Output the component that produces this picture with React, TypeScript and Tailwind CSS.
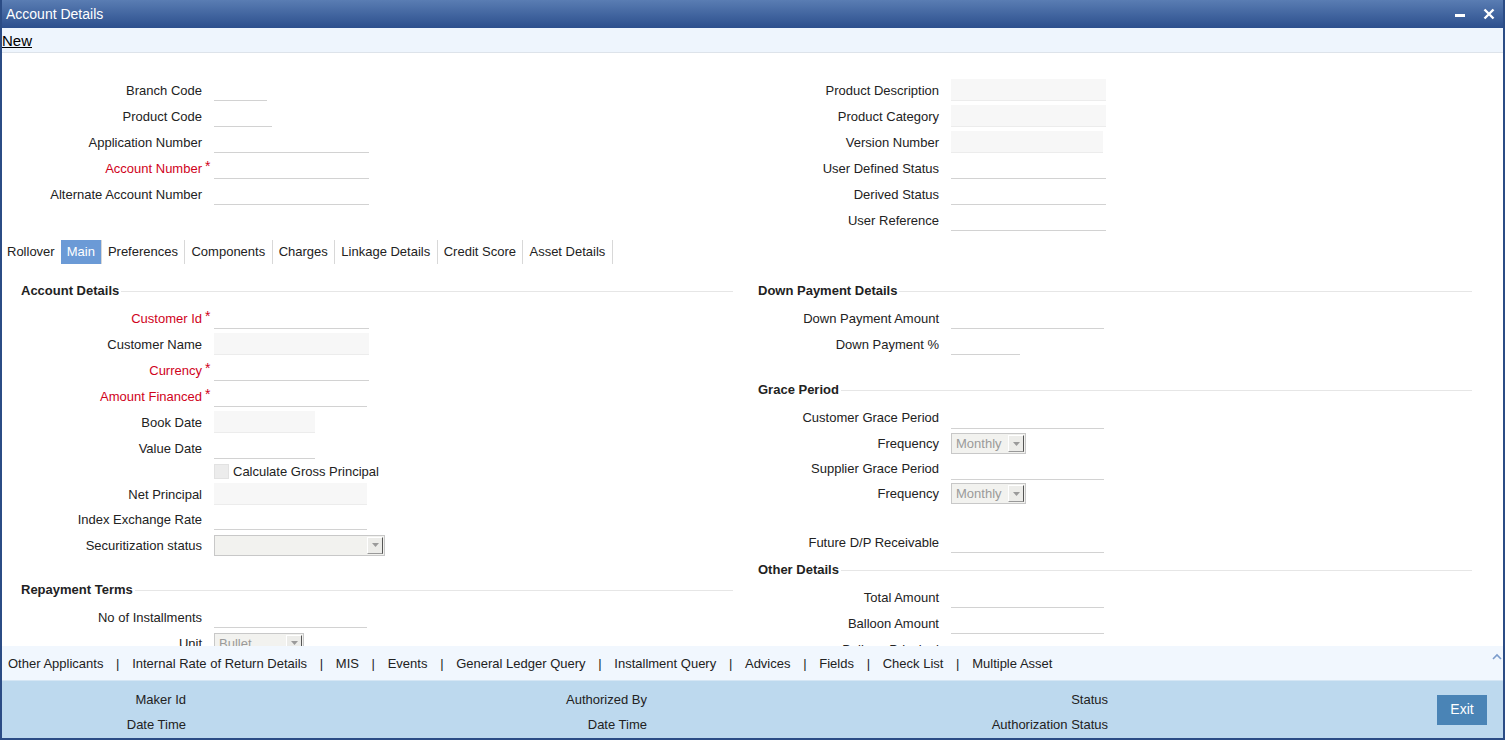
// Account Details window – loan account entry screen

const font = { fontFamily: '"Liberation Sans", Arial, sans-serif' };

type FieldKind = "line" | "filled" | "none";

function Field({
  label,
  width,
  kind = "line",
  required = false,
  labelW,
  h = 26,
}: {
  label: string;
  width: number;
  kind?: FieldKind;
  required?: boolean;
  labelW: number;
  h?: number;
}) {
  return (
    <div className="flex items-center" style={{ height: h }}>
      <div
        className={`text-right text-[13px] leading-[15px] whitespace-nowrap ${
          required ? "text-[#d0021b]" : "text-[#222]"
        }`}
        style={{ width: labelW }}
      >
        {label}
      </div>
      <div className="w-[12px] h-full relative">
        {required && (
          <span className="absolute left-[3px] top-[4px] text-[#d0021b] text-[14px] leading-none">
            *
          </span>
        )}
      </div>
      {kind === "line" && (
        <div className="h-[22px] border-b border-[#d2d2d2]" style={{ width }} />
      )}
      {kind === "filled" && (
        <div
          className="h-[22px] bg-[#f7f7f7] border-b border-[#ececec]"
          style={{ width }}
        />
      )}
    </div>
  );
}

function Select({ value, width }: { value: string; width: number }) {
  return (
    <div
      className="h-[21px] flex items-center border border-[#c8c8c8] bg-[#f2f2ef] pl-[4px] pr-[1px]"
      style={{ width }}
    >
      <span className="flex-1 text-[13px] text-[#9a9a9a] leading-none">{value}</span>
      <span className="w-[16px] h-[17px] bg-[#ecece9] border-t border-l border-white border-r border-b border-r-[#555] border-b-[#999] flex items-center justify-center">
        <svg width="7" height="4" viewBox="0 0 7 4">
          <path d="M0 0h7L3.5 4z" fill="#9a9a9a" />
        </svg>
      </span>
    </div>
  );
}

function SelectRow({
  label,
  value,
  width,
  labelW,
  h = 26,
}: {
  label: string;
  value: string;
  width: number;
  labelW: number;
  h?: number;
}) {
  return (
    <div className="flex items-center" style={{ height: h }}>
      <div
        className="text-right text-[13px] leading-[15px] text-[#222] whitespace-nowrap"
        style={{ width: labelW }}
      >
        {label}
      </div>
      <div className="w-[12px]" />
      <Select value={value} width={width} />
    </div>
  );
}

function Heading({ title, className = "" }: { title: string; className?: string }) {
  return (
    <div className={`flex items-center h-[20px] ${className}`}>
      <span className="text-[13px] font-bold text-[#222] whitespace-nowrap">{title}</span>
      <div className="flex-1 h-px bg-[#e6e6e6] ml-[2px]" />
    </div>
  );
}

const tabs = [
  "Rollover",
  "Main",
  "Preferences",
  "Components",
  "Charges",
  "Linkage Details",
  "Credit Score",
  "Asset Details",
];

const bottomLinks = [
  "Other Applicants",
  "Internal Rate of Return Details",
  "MIS",
  "Events",
  "General Ledger Query",
  "Installment Query",
  "Advices",
  "Fields",
  "Check List",
  "Multiple Asset",
];

export default function App() {
  return (
    <div
      className="w-[1505px] h-[740px] flex flex-col bg-white border-x-2 border-b-2 border-[#2b4c85] overflow-hidden"
      style={font}
    >
      {/* Title bar */}
      <div className="h-[28px] shrink-0 flex items-center bg-gradient-to-b from-[#5a7db3] to-[#2c4f8d] pl-[4px] pr-[8px]">
        <span className="text-white text-[14px] leading-none -mt-[1px]">Account Details</span>
        <div className="flex-1" />
        <svg width="12" height="12" viewBox="0 0 12 12" className="mr-[17px] mt-[1px]">
          <rect x="1" y="5" width="10" height="3" fill="white" />
        </svg>
        <svg width="12" height="12" viewBox="0 0 12 12">
          <path d="M1.5 1.5l9 9M10.5 1.5l-9 9" stroke="white" strokeWidth="2.4" />
        </svg>
      </div>

      {/* Toolbar */}
      <div className="h-[25px] shrink-0 flex items-center bg-[#eef5fd] border-b border-[#dde3ea]">
        <span className="text-[15px] text-black underline leading-none">New</span>
      </div>

      {/* Scroll body */}
      <div className="h-[593px] shrink-0 overflow-hidden">
        {/* Header fields */}
        <div className="flex pt-[24px]">
          <div className="w-[743px]">
            <Field label="Branch Code" width={53} labelW={200} />
            <Field label="Product Code" width={58} labelW={200} />
            <Field label="Application Number" width={155} labelW={200} />
            <Field label="Account Number" width={155} labelW={200} required />
            <Field label="Alternate Account Number" width={155} labelW={200} />
          </div>
          <div>
            <Field label="Product Description" width={155} labelW={194} kind="filled" />
            <Field label="Product Category" width={155} labelW={194} kind="filled" />
            <Field label="Version Number" width={152} labelW={194} kind="filled" />
            <Field label="User Defined Status" width={155} labelW={194} />
            <Field label="Derived Status" width={155} labelW={194} />
            <Field label="User Reference" width={155} labelW={194} />
          </div>
        </div>

        {/* Tabs */}
        <div className="flex h-[24px] mt-[7px] ml-[1px]">
          {tabs.map((t) => (
            <div
              key={t}
              className={`flex items-center text-[13px] ${
                t === "Main" ? "bg-[#6b9ad6] text-white" : "text-[#222]"
              } ${
                t === "Rollover"
                  ? "pl-[4px] pr-[6px]"
                  : t === "Main"
                    ? "px-[6px] border-r border-[#d8d8d8]"
                    : "pl-[6px] pr-[6.5px] border-r border-[#d8d8d8]"
              }`}
            >
              {t}
            </div>
          ))}
        </div>

        {/* Main tab content */}
        <div className="flex">
          {/* Left column */}
          <div className="w-[743px] pr-[12px]">
            <Heading title="Account Details" className="mt-[17px] mb-[4px] pl-[19px]" />
            <Field label="Customer Id" width={155} labelW={200} required />
            <Field label="Customer Name" width={155} labelW={200} kind="filled" />
            <Field label="Currency" width={155} labelW={200} required />
            <Field label="Amount Financed" width={153} labelW={200} required />
            <Field label="Book Date" width={101} labelW={200} kind="filled" />
            <Field label="Value Date" width={101} labelW={200} />
            <div className="flex items-center h-[21px] pl-[212px]">
              <div className="w-[15px] h-[15px] bg-[#ececec] border border-[#e2e2e2]" />
              <span className="ml-[4px] text-[13px] text-[#222]">Calculate Gross Principal</span>
            </div>
            <Field label="Net Principal" width={153} labelW={200} kind="filled" h={24} />
            <Field label="Index Exchange Rate" width={153} labelW={200} />
            <SelectRow label="Securitization status" value="" width={171} labelW={200} />
            <Heading title="Repayment Terms" className="mt-[22px] mb-[4px] pl-[19px]" />
            <Field label="No of Installments" width={153} labelW={200} />
            <SelectRow label="Unit" value="Bullet" width={90} labelW={200} />
          </div>

          {/* Right column */}
          <div className="flex-1 pr-[31px]">
            <Heading title="Down Payment Details" className="mt-[17px] mb-[4px] pl-[13px]" />
            <Field label="Down Payment Amount" width={153} labelW={194} />
            <Field label="Down Payment %" width={69} labelW={194} />
            <Heading title="Grace Period" className="mt-[23px] mb-[4px] pl-[13px]" />
            <Field label="Customer Grace Period" width={153} labelW={194} h={27} />
            <SelectRow label="Frequency" value="Monthly" width={75} labelW={194} h={25} />
            <Field label="Supplier Grace Period" width={153} labelW={194} h={25} />
            <SelectRow label="Frequency" value="Monthly" width={75} labelW={194} h={25} />
            <div className="h-[23px]" />
            <Field label="Future D/P Receivable" width={153} labelW={194} />
            <Heading title="Other Details" className="mt-[5px] mb-[4px] pl-[13px]" />
            <Field label="Total Amount" width={153} labelW={194} />
            <Field label="Balloon Amount" width={153} labelW={194} />
            <Field label="Balloon Principal" width={153} labelW={194} />
          </div>
        </div>
      </div>

      {/* Bottom link bar */}
      <div className="h-[34px] shrink-0 flex items-center bg-[#f1f7fe] pl-[6px] pr-[2px] pt-[1px] relative">
        {bottomLinks.map((l, i) => (
          <div key={l} className="flex items-center text-[13px] text-[#222]">
            {i > 0 && <span className="px-[12.7px]">|</span>}
            <span>{l}</span>
          </div>
        ))}
        <svg
          width="10"
          height="7"
          viewBox="0 0 10 7"
          className="absolute right-[1px] top-[7px]"
        >
          <path d="M1 6l4-4 4 4" stroke="#7b9ccc" strokeWidth="1.6" fill="none" />
        </svg>
      </div>

      {/* Audit footer */}
      <div className="flex-1 flex items-center bg-[#bdd9ee] border-t border-[#d5e6f4]">
        <div className="flex flex-col text-[13px] text-[#222] pt-[5px]">
          <div className="flex h-[25px] items-center">
            <span className="w-[184px] text-right">Maker Id</span>
            <span className="w-[461px] text-right">Authorized By</span>
            <span className="w-[461px] text-right">Status</span>
          </div>
          <div className="flex h-[25px] items-center">
            <span className="w-[184px] text-right">Date Time</span>
            <span className="w-[461px] text-right">Date Time</span>
            <span className="w-[461px] text-right">Authorization Status</span>
          </div>
        </div>
        <div className="flex-1" />
        <button className="w-[50px] h-[30px] bg-[#4a84b6] text-white text-[14px] mr-[16px]">
          Exit
        </button>
      </div>
    </div>
  );
}
